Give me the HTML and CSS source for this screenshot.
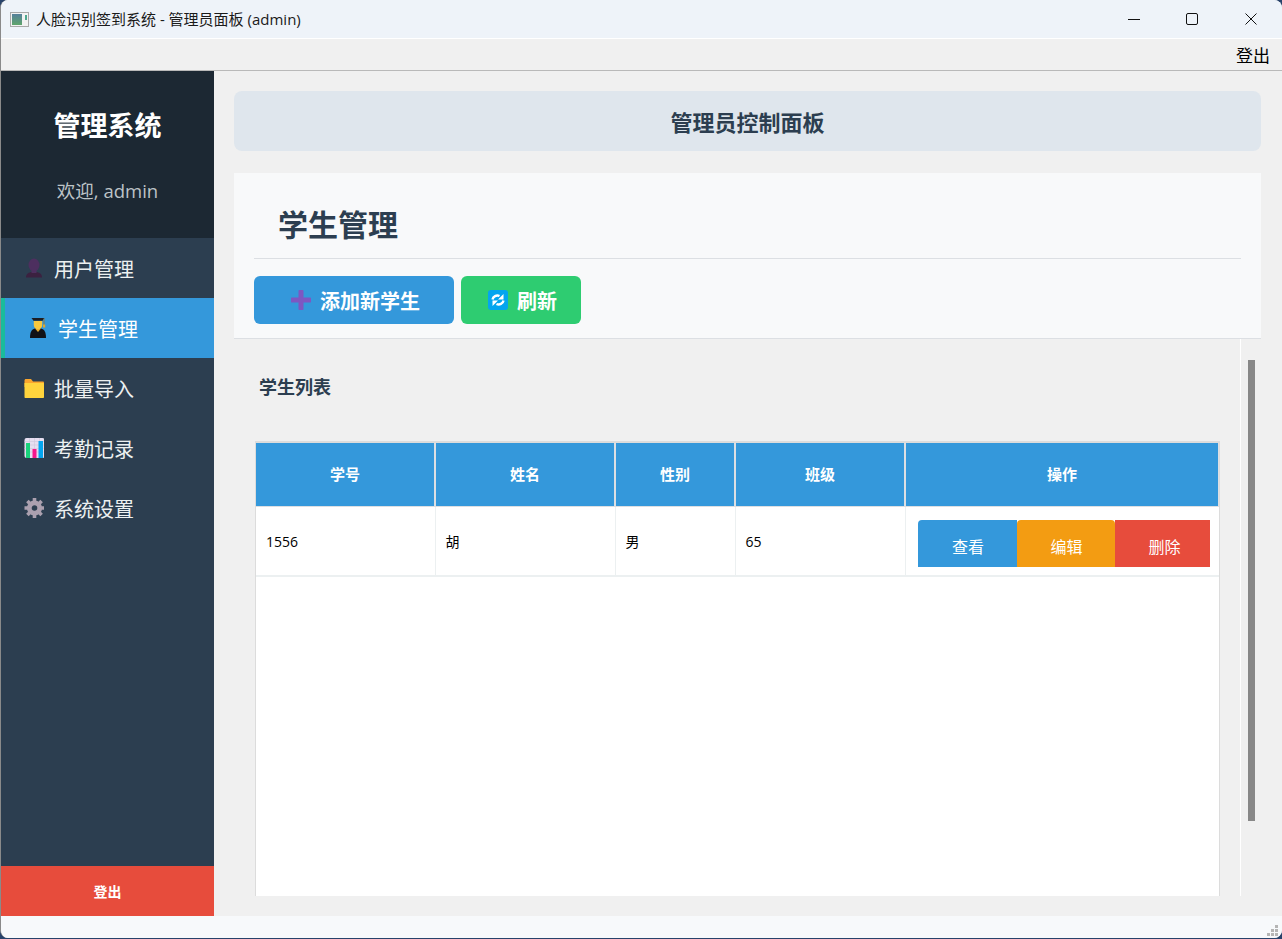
FILE: index.html
```html
<!DOCTYPE html>
<html lang="zh-CN">
<head>
<meta charset="utf-8">
<title>人脸识别签到系统</title>
<link rel="stylesheet" href="styles.css">
</head>
<body>
<div class="window">
  <header class="titlebar">
    <svg class="app-icon" width="19" height="15" viewBox="0 0 19 15"><defs><linearGradient id="ai" x1="0" y1="0" x2="0" y2="1"><stop offset="0" stop-color="#56809c"/><stop offset="1" stop-color="#5fa56b"/></linearGradient></defs><rect x=".5" y=".5" width="18" height="14" fill="#f2f2f2" stroke="#a9a9a9"/><rect x="2" y="2" width="10" height="11" fill="url(#ai)"/><rect x="15" y="3" width="2" height="5" fill="#4fa78f"/></svg>
    <span class="title-text">人脸识别签到系统 - 管理员面板 (admin)</span>
    <div class="win-controls">
      <svg class="win-btn" width="12" height="12" viewBox="0 0 12 12"><path d="M0 6.5h12" stroke="#111" fill="none"/></svg>
      <svg class="win-btn" width="12" height="12" viewBox="0 0 12 12"><rect x=".5" y=".5" width="11" height="11" rx="1.5" stroke="#111" fill="none"/></svg>
      <svg class="win-btn" width="12" height="12" viewBox="0 0 12 12"><path d="M.5.5l11 11M11.5.5l-11 11" stroke="#111" fill="none"/></svg>
    </div>
  </header>
  <div class="menubar"><span>登出</span></div>
  <div class="app">
    <aside class="sidebar">
      <div class="brand">
        <h1 class="brand-title">管理系统</h1>
        <p class="brand-welcome">欢迎, admin</p>
      </div>
      <nav class="nav">
        <a class="nav-item">
          <svg class="nav-icon" viewBox="0 0 20 20"><ellipse cx="10" cy="7" rx="5.5" ry="6.5" fill="#4d2f5f"/><path d="M2 19.5c0-3.500 2-4.500 5-5.500h6c3 1 5 2 5 5.500z" fill="#3b2140"/><rect x="7.5" y="11" width="5" height="4" fill="#4d2f5f"/></svg>
          <span>用户管理</span>
        </a>
        <a class="nav-item active">
          <svg class="nav-icon" viewBox="0 0 20 20"><path d="M2 20c0-6 1.500-8.500 5-9.500h6c3.500 1 5 3.500 5 9.500z" fill="#111116"/><path d="M7 10.500h6L10 14z" fill="#e5a92c"/><path d="M5.800 3h8.400v4c0 2.400-1.900 4.200-4.200 4.200S5.800 9.400 5.800 7z" fill="#f7c83f"/><path d="M3.500 0h13l-2 2.800h-9z" fill="#1c1c22"/><path d="M16 .5v6.500" stroke="#8a7a45"/><rect x="15" y="6.500" width="2.200" height="3" fill="#e0a92e"/></svg>
          <span>学生管理</span>
        </a>
        <a class="nav-item">
          <svg class="nav-icon" viewBox="0 0 20 20"><path d="M.5 2.500C.5 1.600 1 1 2 1h5l2 2.500h10c.5 0 1 .5 1 1V9H.5z" fill="#fba62d"/><path d="M.5 5h18.500c.6 0 1 .4 1 1v13c0 .6-.4 1-1 1H1.500c-.6 0-1-.4-1-1z" fill="#ffd43d"/></svg>
          <span>批量导入</span>
        </a>
        <a class="nav-item">
          <svg class="nav-icon" viewBox="0 0 20 20"><rect x=".5" width="20" height="20" rx="2" fill="#e6def0"/><path d="M.5 3.500h20M.5 7h20M.5 10.500h20M.5 14h20M5.500 0v20M10.500 0v20M15.500 0v20" stroke="#cfc6dc" stroke-width=".6"/><rect x="2" y="5" width="4" height="15" fill="#19d27b"/><rect x="8.500" y="11" width="4" height="9" fill="#f7158c"/><rect x="14.500" y="3" width="4.500" height="17" fill="#04a5ef"/></svg>
          <span>考勤记录</span>
        </a>
        <a class="nav-item">
          <svg class="nav-icon" viewBox="0 0 20 20"><circle cx="10.500" cy="10" r="5.200" fill="none" stroke="#aba0af" stroke-width="4.800"/><path d="M10.500 0v3.500M10.500 16.500V20M.5 10H4M17 10h3.500M3.400 2.900l2.500 2.500M15.100 14.600l2.500 2.500M17.600 2.900l-2.500 2.500M5.900 14.600l-2.500 2.500" stroke="#aba0af" stroke-width="3.600"/></svg>
          <span>系统设置</span>
        </a>
      </nav>
      <button class="side-logout">登出</button>
    </aside>
    <main class="main">
      <div class="page-header">管理员控制面板</div>
      <section class="panel">
        <h2 class="panel-title">学生管理</h2>
        <div class="toolbar">
          <button class="tool-btn tool-add">
            <svg class="tool-icon" viewBox="0 0 20 20"><path d="M10 1.500v17M1.500 10h17" stroke="#7d57c2" stroke-width="5" stroke-linecap="round" fill="none"/></svg>
            添加新学生
          </button>
          <button class="tool-btn tool-refresh">
            <svg class="tool-icon" viewBox="0 0 20 20"><rect width="20" height="20" rx="3" fill="#04a5ef"/><path d="M4.500 9.500C5 6.500 8.500 4.500 11.500 6M15.500 10.500C15 13.500 11.500 15.500 8.500 14" stroke="#fff" stroke-width="2.400" fill="none"/><path d="M15.500 4v5.500h-5.500zM4.500 16v-5.500h5.500z" fill="#fff"/></svg>
            刷新
          </button>
        </div>
      </section>
      <div class="scroll-wrap">
        <div class="content">
          <h3 class="list-title">学生列表</h3>
          <div class="table-box">
            <table class="table">
              <colgroup><col class="c1"><col class="c2"><col class="c3"><col class="c4"><col></colgroup>
              <thead><tr><th>学号</th><th>姓名</th><th>性别</th><th>班级</th><th>操作</th></tr></thead>
              <tbody><tr>
                <td>1556</td><td>胡</td><td>男</td><td>65</td>
                <td class="ops"><div class="ops-row"><button class="op op-view">查看</button><button class="op op-edit">编辑</button><button class="op op-del">删除</button></div></td>
              </tr></tbody>
            </table>
          </div>
        </div>
        <div class="scrollbar"><div class="thumb"></div></div>
      </div>
    </main>
  </div>
  <footer class="statusbar">
    <svg class="grip" width="11" height="11" viewBox="0 0 11 11"><path d="M8 0h3v3H8zM4 4h3v3H4zM8 4h3v3H8zM0 8h3v3H0zM4 8h3v3H4zM8 8h3v3H8z" fill="#b5b5b5"/></svg>
  </footer>
</div>
</body>
</html>
```
FILE: styles.css
```css
* { box-sizing: border-box; }
html, body { margin: 0; height: 100%; }
body {
  background: #28436b;
  font-family: "Open Sans", "Noto Sans CJK SC", sans-serif;
  overflow: hidden;
}
button { font-family: inherit; border: 0; cursor: pointer; }
.window {
  width: 1282px;
  height: 938px;
  display: flex;
  flex-direction: column;
  background: #f0f0f0;
  border-radius: 8px;
  border-left: 1px solid #8a8a8a;
  overflow: hidden;
}
.titlebar {
  flex: 0 0 39px;
  display: flex;
  align-items: center;
  padding-left: 9px;
  background: #eef3f9;
  border-bottom: 1px solid #fff;
  color: #1a1a1a;
}
.app-icon { margin-right: 7px; }
.title-text { font-size: 15px; white-space: nowrap; margin-top: -2px; }
.win-controls { margin-left: auto; display: flex; height: 100%; align-items: center; padding-right: 25px; }
.win-btn { margin: 0 0 1px 47px; }
.win-btn:first-child { margin: 0 -1px 1px 0; }
.menubar {
  flex: 0 0 32px;
  display: flex;
  justify-content: flex-end;
  align-items: center;
  padding-right: 12px;
  background: #f0f0f0;
  border-bottom: 1px solid #b9b9b9;
  font-size: 17px;
  color: #000;
}
.app { flex: 1 1 0; min-height: 0; display: flex; }
.sidebar {
  flex: 0 0 213px;
  display: flex;
  flex-direction: column;
  background: #2c3e50;
}
.brand {
  height: 167px;
  background: #1c2833;
  text-align: center;
  padding-top: 34px;
}
.brand-title { margin: 0; font-size: 27px; line-height: 42px; font-weight: 700; color: #fff; }
.brand-welcome { margin: 30px 0 0; font-size: 18.5px; line-height: 28px; color: #bdc3c7; }
.nav { flex: 1 1 0; }
.nav-item {
  height: 60px;
  display: flex;
  align-items: center;
  gap: 10px;
  padding-left: 23px;
  font-size: 20px;
  color: #ecf0f1;
}
.nav-item.active {
  background: #3498db;
  border-left: 4px solid #1abc9c;
  color: #fff;
}
.nav-icon { width: 20px; height: 20px; flex: none; }
.side-logout {
  height: 50px;
  background: #e74c3c;
  color: #fff;
  font-size: 14px;
  font-weight: 700;
}
.main {
  flex: 1 1 0;
  min-width: 0;
  padding: 20px 21px 20px 20px;
  display: flex;
  flex-direction: column;
}
.page-header {
  height: 60px;
  flex: none;
  background: #dfe6ed;
  border-radius: 8px;
  display: flex;
  align-items: center;
  justify-content: center;
  font-size: 22px;
  font-weight: 700;
  color: #2c3e50;
}
.panel {
  flex: none;
  height: 166px;
  margin-top: 22px;
  padding: 0 20px;
  background: #f8f9fa;
  border-bottom: 1px solid #dcdfe3;
}
.panel-title {
  margin: 0;
  height: 86px;
  padding: 30px 0 0 24px;
  font-size: 30px;
  line-height: 44px;
  font-weight: 700;
  color: #2c3e50;
  border-bottom: 1px solid #dcdfe3;
}
.toolbar { display: flex; gap: 7px; margin-top: 17px; }
.tool-btn {
  height: 48px;
  padding: 0 0 0 3px;
  border-radius: 6px;
  color: #fff;
  font-size: 20px;
  font-weight: 700;
  display: flex;
  align-items: center;
  justify-content: center;
  gap: 9px;
}
.tool-add { width: 200px; background: #3498db; }
.tool-refresh { width: 120px; background: #2ecc71; }
.tool-icon { width: 20px; height: 20px; flex: none; }
.scroll-wrap { flex: 1 1 0; min-height: 0; display: flex; overflow: hidden; }
.content { flex: 0 0 1007px; padding: 0 20px 0 21px; border-right: 1px solid #fff; overflow: hidden; }
.list-title {
  margin: 0;
  height: 102px;
  padding: 35px 0 0 4px;
  font-size: 18px;
  line-height: 26px;
  font-weight: 700;
  color: #2c3e50;
}
.table-box {
  height: 456px;
  background: #fff;
  border: 1px solid #dcdcdc;
  border-top-width: 2px;
  width: 965px;
}
.table { width: 963px; table-layout: fixed; border-collapse: collapse; }
.c1 { width: 179px; }
.c2 { width: 180px; }
.c3 { width: 120px; }
.c4 { width: 170px; }
th {
  height: 63px;
  padding: 0 0 2px;
  background: #3498db;
  color: #fff;
  font-size: 15px;
  font-weight: 700;
  border-left: 2px solid #dcdfe3;
  border-bottom: 1px solid #dcdfe3;
}
th:first-child { border-left: 0; }
th:last-child { border-right: 1px solid #dcdfe3; }
td {
  height: 70px;
  padding: 1px 0 0 10px;
  font-size: 14px;
  color: #000;
  border-left: 1px solid #ecf0f1;
  border-bottom: 2px solid #ecf0f1;
}
td:first-child { border-left: 0; }
td.ops { padding: 13px 9px 0 12px; vertical-align: top; }
.ops-row { display: flex; height: 47px; }
.op { color: #fff; font-size: 16px; padding: 5px 0 0 2px; height: 47px; }
.op-view { width: 99px; background: #3498db; border-radius: 4px 0 0 0; }
.op-edit { width: 98px; background: #f39c12; border-radius: 4px 4px 0 0; }
.op-del { width: 95px; background: #e74c3c; padding-left: 5px; }
.scrollbar { flex: 1 1 0; padding: 21px 6px 0 7px; }
.thumb { width: 7px; height: 461px; background: #888; }
.statusbar {
  flex: 0 0 22px;
  background: #f7f9fb;
  display: flex;
  justify-content: flex-end;
  align-items: flex-end;
  padding: 0 4px 2px 0;
}
.grip { display: block; }
```
